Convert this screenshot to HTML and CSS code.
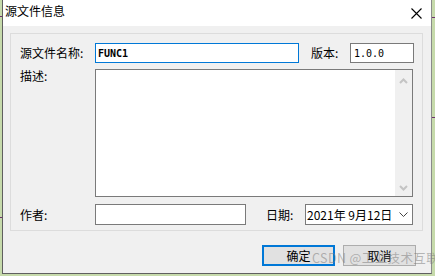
FILE: index.html
```html
<!DOCTYPE html>
<html lang="zh-CN">
<head>
  <meta charset="UTF-8">
  <title>源文件信息</title>
  <link rel="stylesheet" href="styles.css">
</head>
<body>
  <div class="window">
    <div class="titlebar">
      <span class="title">源文件信息</span>
      <svg class="close" width="11" height="11" viewBox="0 0 11 11">
        <path d="M0.5 0.5 L10.5 10.5 M10.5 0.5 L0.5 10.5" stroke="#000" stroke-width="1.1" fill="none"/>
      </svg>
    </div>

    <div class="content">
      <div class="group">
        <div class="row row-name">
          <div class="lbl">源文件名称:</div>
          <div class="field field-name focused">FUNC1</div>
          <div class="lbl lbl-side">版本:</div>
          <div class="field field-ver">1.0.0</div>
        </div>

        <div class="row row-desc">
          <div class="lbl">描述:</div>
          <div class="memo">
            <div class="memo-text"></div>
            <div class="scrollbar">
              <svg width="9" height="6" viewBox="0 0 9 6">
                <path d="M1 5 L4.5 1.5 L8 5" stroke="#c4c4c4" stroke-width="2" fill="none"/>
              </svg>
              <svg width="9" height="6" viewBox="0 0 9 6">
                <path d="M1 1 L4.5 4.5 L8 1" stroke="#c4c4c4" stroke-width="2" fill="none"/>
              </svg>
            </div>
          </div>
        </div>

        <div class="row row-author">
          <div class="lbl">作者:</div>
          <div class="field field-author"></div>
          <div class="lbl lbl-date">日期:</div>
          <div class="field field-date">
            <span>2021年&nbsp;9月12日</span>
            <svg width="9" height="6" viewBox="0 0 9 6">
              <path d="M0.5 0.5 L4.5 4.5 L8.5 0.5" stroke="#444" stroke-width="1" fill="none"/>
            </svg>
          </div>
        </div>
      </div>

      <div class="buttons">
        <div class="btn btn-default">确定</div>
        <div class="btn">取消</div>
      </div>

      <div class="watermark">CSDN @工业技术互联</div>
    </div>
  </div>
</body>
</html>
```

FILE: styles.css
```css
body {
  margin: 0;
  height: 276px;
  overflow: hidden;
  font-family: "Noto Sans CJK SC", "Noto Sans", sans-serif;
  font-size: 12px;
  color: #000;
  background:
    linear-gradient(#6e2f6e, #6e2f6e) 0 16px / 2px 1px no-repeat,
    linear-gradient(#6e2f6e, #6e2f6e) 0 217px / 2px 1px no-repeat,
    linear-gradient(#6e2f6e, #6e2f6e) 432px 17px / 3px 1px no-repeat,
    linear-gradient(#6e2f6e, #6e2f6e) 432px 117px / 3px 1px no-repeat,
    #c6daab;
}

.window {
  box-sizing: border-box;
  width: 430px;
  height: 274px;
  margin-left: 2px;
  border-left: 1px solid #5f5f5f;
  border-right: 1px solid #8a8a8a;
  border-bottom: 1px solid #5f5f5f;
  background: #f0f0f0;
}

.titlebar {
  height: 26px;
  background: #fff;
  display: flex;
  justify-content: space-between;
  align-items: flex-start;
}

.title {
  line-height: 12px;
  padding: 5px 0 0 2px;
}

.close {
  margin: 8px 9px 0 0;
}

.content {
  position: relative;
  padding-top: 7px;
}

.group {
  box-sizing: border-box;
  height: 198px;
  margin: 0 8px 0 7px;
  padding: 9px 0 0 9px;
  border: 1px solid #dcdcdc;
  display: flex;
  flex-direction: column;
}

.row {
  display: flex;
}

.row-name {
  height: 20px;
  align-items: center;
}

.row-desc {
  height: 128px;
  margin-top: 6px;
  align-items: flex-start;
}

.row-author {
  height: 21px;
  margin-top: 7px;
  align-items: center;
}

.lbl {
  width: 75px;
  flex: none;
  line-height: 14px;
}

.lbl-side {
  width: 39px;
  margin-left: 12px;
}

.lbl-date {
  width: 39px;
  margin-left: 20px;
}

.field {
  box-sizing: border-box;
  height: 100%;
  background: #fff;
  border: 1px solid #7a7a7a;
  display: flex;
  align-items: center;
  flex: none;
}

.field.focused {
  border-color: #0078d7;
}

.field-name {
  width: 204px;
  padding-left: 2px;
  font-family: "DejaVu Sans Mono", monospace;
  font-size: 10px;
  font-weight: bold;
}

.field-ver {
  width: 64px;
  padding-left: 3px;
  font-family: "DejaVu Sans Mono", monospace;
  font-size: 10px;
}

.field-author {
  width: 151px;
}

.field-date {
  width: 108px;
  padding: 0 4px 0 1px;
  justify-content: space-between;
}

.memo {
  box-sizing: border-box;
  width: 318px;
  height: 128px;
  background: #fff;
  border: 1px solid #7a7a7a;
  display: flex;
}

.memo-text {
  flex: 1;
}

.scrollbar {
  width: 17px;
  background: #f0f0f0;
  display: flex;
  flex-direction: column;
  justify-content: space-between;
  align-items: center;
  padding: 8px 0 5px;
}

.buttons {
  display: flex;
  justify-content: flex-end;
  gap: 8px;
  margin-top: 14px;
  padding-right: 15px;
}

.btn {
  box-sizing: border-box;
  width: 73px;
  height: 21px;
  background: #e1e1e1;
  border: 1px solid #adadad;
  display: flex;
  align-items: center;
  justify-content: center;
}

.btn-default {
  border: 2px solid #0078d7;
}

.watermark {
  position: absolute;
  left: 309px;
  top: 225px;
  font-size: 12.5px;
  line-height: 14px;
  letter-spacing: 0.4px;
  color: rgba(120, 120, 120, 0.5);
  white-space: nowrap;
}
```
